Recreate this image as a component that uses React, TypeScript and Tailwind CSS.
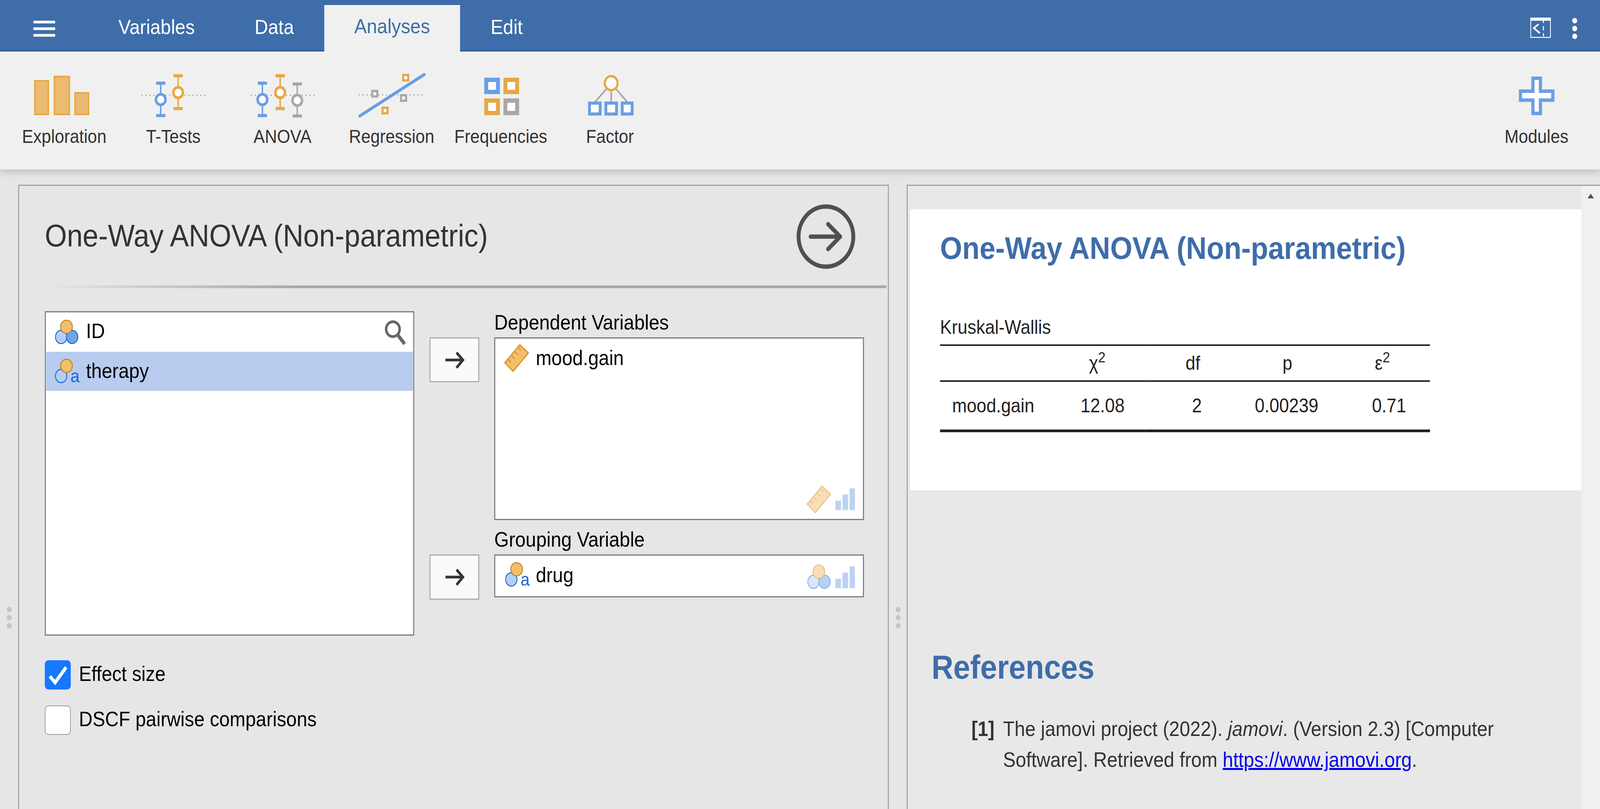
const BLUE = '#6a9ee6';
const ORANGE = '#e6a845';
const GRAY = '#a8a8a8';

function Stat({ x, top, bottom, cy, color }: { x: number; top: number; bottom: number; cy: number; color: string }) {
  return (
    <g>
      <rect x={x - 2} y={top} width={4} height={bottom - top} fill={color} />
      <rect x={x - 13} y={top} width={26} height={8} fill={color} />
      <rect x={x - 13} y={bottom - 8} width={26} height={8} fill={color} />
      <circle cx={x} cy={cy} r={13.5} fill="#fff" stroke={color} strokeWidth={7} />
    </g>
  );
}

function Sq({ x, y, color }: { x: number; y: number; color: string }) {
  return <rect x={x - 7} y={y - 7} width={14} height={14} fill="#fff" stroke={color} strokeWidth={6} />;
}

function ToolIcon({ name }: { name: string }) {
  if (name === 'Exploration') {
    return (
      <svg width="307" height="130" viewBox="24 180 307 130">
        <g fill="#ebbb72" stroke="#e5a83f" strokeWidth="4">
          <rect x="98" y="209" width="38" height="86" />
          <rect x="153" y="198" width="42" height="97" />
          <rect x="211" y="240" width="38" height="55" />
        </g>
      </svg>
    );
  }
  if (name === 'T-Tests') {
    return (
      <svg width="307" height="130" viewBox="331 180 307 130">
        <line x1="399" y1="246" x2="577" y2="246" stroke="#66788f" strokeWidth="3" strokeDasharray="2 9" />
        <Stat x={452} top={211} bottom={302} cy={257} color={BLUE} />
        <Stat x={501} top={192} bottom={284} cy={239} color={ORANGE} />
      </svg>
    );
  }
  if (name === 'ANOVA') {
    return (
      <svg width="307" height="130" viewBox="638 180 307 130">
        <line x1="706" y1="246" x2="884" y2="246" stroke="#66788f" strokeWidth="3" strokeDasharray="2 9" />
        <Stat x={738} top={211} bottom={302} cy={257} color={BLUE} />
        <Stat x={788} top={192} bottom={284} cy={239} color={ORANGE} />
        <Stat x={836} top={213} bottom={303} cy={259} color={GRAY} />
      </svg>
    );
  }
  if (name === 'Regression') {
    return (
      <svg width="307" height="130" viewBox="946 180 307 130">
        <line x1="1010" y1="245" x2="1196" y2="245" stroke="#66788f" strokeWidth="3" strokeDasharray="2 9" />
        <line x1="1013" y1="299" x2="1194" y2="193" stroke={BLUE} strokeWidth="8" strokeLinecap="round" />
        <Sq x={1055} y={242} color={GRAY} />
        <Sq x={1136} y={253} color={GRAY} />
        <Sq x={1142} y={201} color={ORANGE} />
        <Sq x={1084} y={285} color={ORANGE} />
      </svg>
    );
  }
  if (name === 'Frequencies') {
    return (
      <svg width="307" height="130" viewBox="1251 180 307 130">
        <g fill="#fff" strokeWidth="11">
          <rect x="1366.5" y="206.5" width="33" height="31" stroke={BLUE} />
          <rect x="1420.5" y="206.5" width="33" height="31" stroke={ORANGE} />
          <rect x="1366.5" y="259.5" width="33" height="32" stroke={ORANGE} />
          <rect x="1420.5" y="259.5" width="33" height="32" stroke={GRAY} />
        </g>
      </svg>
    );
  }
  if (name === 'Factor') {
    return (
      <svg width="307" height="130" viewBox="1558 180 307 130">
        <g stroke="#a0a0a0" strokeWidth="4">
          <line x1="1706" y1="228" x2="1672" y2="264" />
          <line x1="1718" y1="236" x2="1718" y2="264" />
          <line x1="1730" y1="228" x2="1764" y2="264" />
        </g>
        <circle cx="1718" cy="215" r="18" fill="#fff" stroke={ORANGE} strokeWidth="6" />
        <g fill="#fff" stroke={BLUE} strokeWidth="8">
          <rect x="1657" y="266" width="30" height="28" />
          <rect x="1703" y="266" width="30" height="28" />
          <rect x="1749" y="266" width="28" height="28" />
        </g>
      </svg>
    );
  }
  return (
    <svg width="307" height="130" viewBox="4168 180 307 130">
      <path
        d="M4311.5 202.5h21v33h35v23h-35v34h-21v-34h-35v-23h35z"
        fill="#fff"
        stroke={BLUE}
        strokeWidth="9"
      />
    </svg>
  );
}

function Tool({ name }: { name: string }) {
  return (
    <div className="flex w-[307px] flex-col items-center">
      <ToolIcon name={name} />
      <span className={`mt-[17px] text-[47.5px] leading-[50px] text-[#333333] ${name === 'Modules' ? '' : 'pl-[6px]'}`}>{name}</span>
    </div>
  );
}

function Nominal({ text = false, className = '' }: { text?: boolean; className?: string }) {
  return (
    <svg width="70" height="70" viewBox="0 0 70 70" className={className}>
      <ellipse cx="17" cy="44" rx="16" ry="17" fill="#b4cff3" stroke="#1a66d9" strokeWidth="2.5" />
      {text ? (
        <text x="43" y="60" fontSize="46" fill="#1a66d9" fontFamily="Liberation Sans">a</text>
      ) : (
        <ellipse cx="48" cy="44" rx="16" ry="17" fill="#72a3e8" stroke="#1a66d9" strokeWidth="2.5" />
      )}
      <ellipse cx="32" cy="18" rx="16.5" ry="17" fill="#f2bf6b" stroke="#c47f1a" strokeWidth="2.5" />
    </svg>
  );
}

function Ruler({ className = '' }: { className?: string }) {
  return (
    <svg width="70" height="72" viewBox="0 0 70 72" className={className}>
      <polygon points="44,2 68,23 25,70 2,48" fill="#f2bf6b" stroke="#e0891a" strokeWidth="3" />
      <g stroke="#c98a2c" strokeWidth="2.5">
        <line x1="41" y1="10" x2="47" y2="17" />
        <line x1="31" y1="20" x2="38" y2="28" />
        <line x1="22" y1="30" x2="28" y2="38" />
        <line x1="12" y1="40" x2="19" y2="47" />
      </g>
    </svg>
  );
}

function Bars({ className = '' }: { className?: string }) {
  return (
    <svg width="56" height="57" viewBox="0 0 56 57" className={className}>
      <g fill="#bcd2f3" stroke="#c9dbf6" strokeWidth="1.5">
        <rect x="1" y="33" width="15" height="23" />
        <rect x="21" y="17" width="15" height="39" />
        <rect x="41" y="1" width="14" height="55" />
      </g>
    </svg>
  );
}

function ArrowButton({ className = '' }: { className?: string }) {
  return (
    <button className={`flex w-[140px] items-center justify-center border-[3px] border-[#acacac] bg-[#fafafa] ${className}`}>
      <svg width="60" height="50" viewBox="0 0 60 50" fill="none" stroke="#333333" strokeWidth="7">
        <line x1="5" y1="25" x2="50" y2="25" />
        <polyline points="36,6 54,25 36,45" />
      </svg>
    </button>
  );
}

function Dots({ className = '' }: { className?: string }) {
  return (
    <div className={`flex flex-col items-center gap-[7px] ${className}`}>
      <div className="h-[14px] w-[14px] rounded-full bg-[#c6c6c6]" />
      <div className="h-[14px] w-[14px] rounded-full bg-[#c6c6c6]" />
      <div className="h-[14px] w-[14px] rounded-full bg-[#c6c6c6]" />
    </div>
  );
}

const tools = ['Exploration', 'T-Tests', 'ANOVA', 'Regression', 'Frequencies', 'Factor'];

export default function App() {
  return (
    <div className="h-screen w-full overflow-hidden">
      {/* the window is 4096 wide, the design 4500 */}
      <div className="flex h-[2072px] w-[4500px] origin-top-left scale-x-[0.9102] flex-col overflow-hidden bg-[#e6e6e6] font-['Liberation_Sans',Arial,sans-serif] text-[53px]">
        {/* Tabs */}
        <div className="relative z-20 flex h-[132px] items-stretch border-b-[4px] border-[#2f5f9f] bg-[#3e6da9] text-[52.5px] text-white">
          <div className="flex w-[94px]" />
          <div className="flex w-[61px] flex-col justify-center gap-[10px] pt-[18px]">
            <div className="h-[7px] bg-white" />
            <div className="h-[7px] bg-white" />
            <div className="h-[7px] bg-white" />
          </div>
          <div className="flex w-[178px] items-center" />
          <div className="flex h-[124px] items-center pt-[14px]">Variables</div>
          <div className="w-[168px]" />
          <div className="flex h-[124px] items-center pt-[14px]">Data</div>
          <div className="w-[85px]" />
          <div className="z-10 -mb-[4px] mt-[13px] flex w-[382px] items-center justify-center border-t-[2px] border-white bg-[#f0f0f0] pb-[12px] text-[#3e6da9]">Analyses</div>
          <div className="flex h-[124px] items-center pl-[86px] pt-[14px]">Edit</div>
          <div className="ml-auto flex items-start gap-[60px] pr-[64px] pt-[45px]">
            <svg width="58" height="52" viewBox="0 0 58 52" fill="none" stroke="#fff">
              <rect x="1.2" y="1.2" width="55.6" height="49.6" strokeWidth="2.5" />
              <rect x="0" y="0" width="58" height="8" fill="#fff" stroke="none" />
              <polyline points="23,17 10,27 27,40" strokeWidth="4.5" />
              <path d="M37 8v6M37 22v11M37 40v8" strokeWidth="3" />
            </svg>
            <div className="flex flex-col gap-[6px] pt-[1px]">
              <div className="h-[14px] w-[14px] rounded-full bg-white" />
              <div className="h-[14px] w-[14px] rounded-full bg-white" />
              <div className="h-[14px] w-[14px] rounded-full bg-white" />
            </div>
          </div>
        </div>

        {/* Ribbon */}
        <div className="relative z-10 flex h-[302px] items-start bg-[#f0f0f0] pl-[24px] pr-[25px] pt-[46px] shadow-[0_4px_22px_rgba(0,0,0,0.22)]">
          {tools.map((t) => (
            <Tool key={t} name={t} />
          ))}
          <div className="ml-auto">
            <Tool name="Modules" />
          </div>
        </div>

        <div className="flex min-h-0 flex-1 pt-[39px]">
          <div className="w-[51px] pt-[1081px]">
            <Dots />
          </div>

          {/* Options panel */}
          <div className="w-[2449px] border-x-[3px] border-t-[3px] border-[#a3a3a3] text-black">
            <div className="flex h-[255px] items-center justify-between pl-[72px] pr-[89px]">
              <h1 className="text-[79.8px] font-normal leading-none text-[#333333]">One-Way ANOVA (Non-parametric)</h1>
              <svg width="170" height="170" viewBox="0 0 170 170" fill="none" stroke="#505050" strokeWidth="11" strokeLinecap="round" strokeLinejoin="round" className="mt-[4px]">
                <circle cx="85" cy="85" r="77" />
                <path d="M42 85h83M91 53l34 32-34 32" />
              </svg>
            </div>
            <div className="ml-[72px] mr-[4px] h-[7px] bg-linear-to-r from-[#e6e6e6] via-[#a8a8a8] via-30% to-[#a8a8a8]" />

            <div className="flex pl-[72px] pt-[59px]">
              <div className="h-[831px] w-[1039px] border-[3px] border-[#7c7c7c] bg-white p-px">
                <div className="flex h-[100px] items-center">
                  <Nominal className="ml-[25px] mt-[6px]" />
                  <span className="ml-[17px] pb-[6px]">ID</span>
                  <svg width="70" height="70" viewBox="0 0 70 70" fill="none" stroke="#666666" strokeWidth="7" className="ml-auto mr-[15px]">
                    <circle cx="29" cy="27" r="19" />
                    <line x1="42" y1="41" x2="62" y2="65" strokeWidth="9" />
                  </svg>
                </div>
                <div className="flex h-[100px] items-center bg-[#b7ccee]">
                  <Nominal text className="ml-[25px] mt-[6px]" />
                  <span className="ml-[17px] pb-[2px]">therapy</span>
                </div>
              </div>

              <div className="ml-[43px] grid grid-cols-[140px_1040px] grid-rows-[67px_468px_88px_116px] gap-x-[42px]">
                <div />
                <div className="flex items-center pb-[10px] leading-none">Dependent Variables</div>
                <ArrowButton className="h-[115px]" />
                <div className="flex flex-col border-[3px] border-[#7c7c7c] bg-white">
                  <div className="flex h-[100px] items-center pl-[25px]">
                    <Ruler />
                    <span className="ml-[19px]">mood.gain</span>
                  </div>
                  <div className="mt-auto flex items-start justify-end pb-[14px] pr-[22px]">
                    <Ruler className="opacity-50" />
                    <Bars className="ml-[11px] mt-[7px]" />
                  </div>
                </div>
                <div />
                <div className="flex items-end pb-[12px] leading-none">Grouping Variable</div>
                <ArrowButton className="h-[116px]" />
                <div className="flex h-[110px] items-center border-[3px] border-[#7c7c7c] bg-white pl-[28px] pr-[22px]">
                  <Nominal text />
                  <span className="ml-[16px] pb-[4px]">drug</span>
                  <Nominal className="ml-auto mt-[12px] opacity-50" />
                  <Bars className="ml-[8px] mt-[6px]" />
                </div>
              </div>
            </div>

            <div className="ml-[72px] mt-[63px] flex flex-col gap-[41px]">
              <label className="flex h-[75px] items-center gap-[23px]">
                <span className="flex h-[75px] w-[73px] items-center justify-center rounded-[10px] bg-[#1678fe]">
                  <svg width="73" height="75" viewBox="0 0 73 75" fill="none" stroke="#fff" strokeWidth="9">
                    <polyline points="14,41 29,57 60,18" />
                  </svg>
                </span>
                <span className="pb-[6px]">Effect size</span>
              </label>
              <label className="flex h-[75px] items-center gap-[23px]">
                <span className="h-[75px] w-[73px] rounded-[10px] border-[2px] border-[#9a9a9a] bg-white" />
                <span className="pb-[6px]">DSCF pairwise comparisons</span>
              </label>
            </div>
          </div>

          <div className="w-[50px] pl-[1px] pt-[1081px]">
            <Dots />
          </div>

          {/* Results panel */}
          <div className="flex flex-1 border-l-[3px] border-t-[3px] border-[#a3a3a3] bg-[#e8e8e8]">
            <div className="w-[1895px] pl-[7px] pt-[60px] text-[#333333]">
              <div className="h-[720px] w-[1888px] bg-white pl-[84px] pt-[60px]">
                <h2 className="text-[80px] font-bold leading-none text-[#3e6da9]">One-Way ANOVA (Non-parametric)</h2>
                <div className="mt-[137px] text-[49.5px] leading-[50px] text-[#222222]">Kruskal-Wallis</div>
                <table className="mt-[19px] w-[1378px] table-fixed text-[49.5px] text-[#222222]">
                  <colgroup>
                    <col className="w-[306px]" />
                    <col className="w-[272px]" />
                    <col className="w-[266px]" />
                    <col className="w-[266px]" />
                    <col className="w-[268px]" />
                  </colgroup>
                  <thead>
                    <tr className="h-[92px] border-y-[4px] border-[#222222]">
                      <th />
                      <th className="font-normal">χ<sup>2</sup></th>
                      <th className="font-normal">df</th>
                      <th className="font-normal">p</th>
                      <th className="font-normal">ε<sup>2</sup></th>
                    </tr>
                  </thead>
                  <tbody>
                    <tr className="h-[127px] border-b-[7px] border-[#222222]">
                      <td className="pl-[34px]">mood.gain</td>
                      <td className="pr-[59px] text-right">12.08</td>
                      <td className="pr-[108px] text-right">2</td>
                      <td className="pr-[46px] text-right">0.00239</td>
                      <td className="pr-[67px] text-right">0.71</td>
                    </tr>
                  </tbody>
                </table>
              </div>

              <h2 className="ml-[60px] mt-[410px] text-[85px] font-bold leading-none text-[#3e6da9]">References</h2>
              <div className="ml-[172px] mt-[76px] flex text-[53.2px] leading-[79px]">
                <span className="w-[89px] shrink-0 font-bold">[1]</span>
                <p className="w-[1440px]">
                  The jamovi project (2022). <em>jamovi</em>. (Version 2.3) [Computer Software]. Retrieved from{' '}
                  <a className="text-[#0000ee] underline" href="#">https://www.jamovi.org</a>.
                </p>
              </div>
            </div>
            <div className="flex flex-1 justify-center bg-[#f0f0f0] pt-[20px]">
              <svg width="18" height="12" viewBox="0 0 18 12">
                <polygon points="9,0 18,12 0,12" fill="#505050" />
              </svg>
            </div>
          </div>
        </div>
      </div>
    </div>
  );
}
